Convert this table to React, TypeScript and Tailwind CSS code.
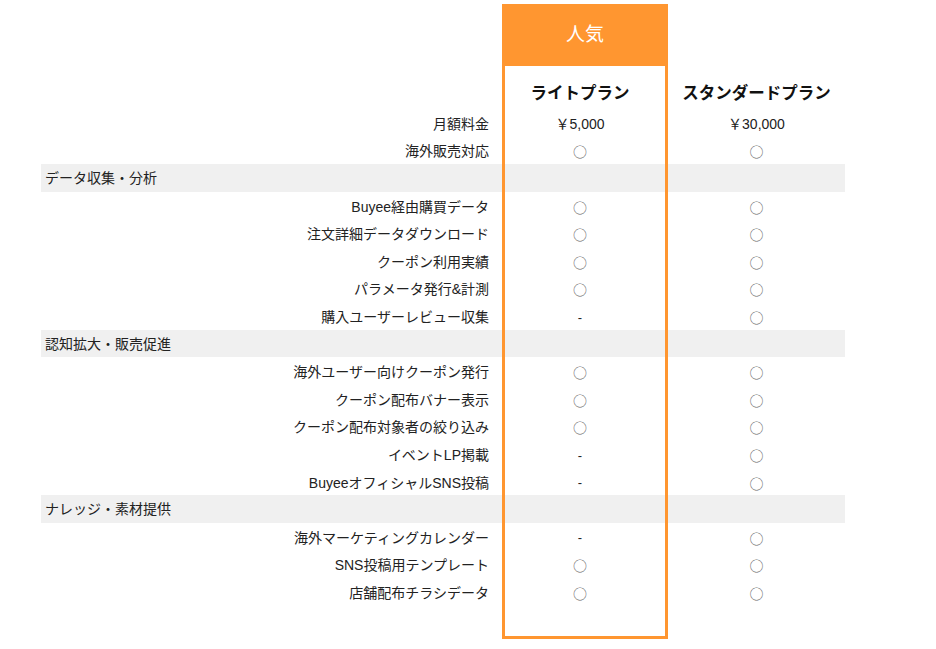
type Row =
  | { kind: "item"; label: string; light: string; standard: string }
  | { kind: "category"; label: string };

const rows: Row[] = [
  { kind: "item", label: "月額料金", light: "￥5,000", standard: "￥30,000" },
  { kind: "item", label: "海外販売対応", light: "o", standard: "o" },
  { kind: "category", label: "データ収集・分析" },
  { kind: "item", label: "Buyee経由購買データ", light: "o", standard: "o" },
  { kind: "item", label: "注文詳細データダウンロード", light: "o", standard: "o" },
  { kind: "item", label: "クーポン利用実績", light: "o", standard: "o" },
  { kind: "item", label: "パラメータ発行&計測", light: "o", standard: "o" },
  { kind: "item", label: "購入ユーザーレビュー収集", light: "-", standard: "o" },
  { kind: "category", label: "認知拡大・販売促進" },
  { kind: "item", label: "海外ユーザー向けクーポン発行", light: "o", standard: "o" },
  { kind: "item", label: "クーポン配布バナー表示", light: "o", standard: "o" },
  { kind: "item", label: "クーポン配布対象者の絞り込み", light: "o", standard: "o" },
  { kind: "item", label: "イベントLP掲載", light: "-", standard: "o" },
  { kind: "item", label: "BuyeeオフィシャルSNS投稿", light: "-", standard: "o" },
  { kind: "category", label: "ナレッジ・素材提供" },
  { kind: "item", label: "海外マーケティングカレンダー", light: "-", standard: "o" },
  { kind: "item", label: "SNS投稿用テンプレート", light: "o", standard: "o" },
  { kind: "item", label: "店舗配布チラシデータ", light: "o", standard: "o" },
];

function Cell({ value }: { value: string }) {
  if (value === "o")
    return (
      <span
        className="text-[14px] leading-none text-[#666] pt-[2px]"
        style={{ fontFamily: '"Noto Sans CJK JP", sans-serif' }}
      >
        ○
      </span>
    );
  if (value === "-") return <span className="text-[13px] pt-[3px]">-</span>;
  return <span className="text-[14px] pt-[3px]">{value}</span>;
}

const grid = "grid grid-cols-[461px_166px_177px]";
const lightCol = "border-x-[3px] border-[#ff9630]";

export default function App() {
  return (
    <div
      className="w-[936px] h-[649px] bg-white text-[#222] pt-[4px] pl-[41px]"
      style={{ fontFamily: '"Liberation Sans", "Noto Sans CJK JP", sans-serif' }}
    >
      <div className="w-[804px]">
        <div className={grid}>
          <div />
          <div className="h-[62px] bg-[#ff9630] flex items-center justify-center text-white text-[19px]">
            人気
          </div>
          <div />
        </div>

        <div className={`${grid} h-[43px]`}>
          <div />
          <div className={`${lightCol} flex items-end justify-center pb-[3px] pr-[10px] text-[16.5px] font-bold text-[#111]`}>
            ライトプラン
          </div>
          <div className="flex items-end justify-center pb-[3px] text-[16.5px] font-bold text-[#111]">
            スタンダードプラン
          </div>
        </div>

        {rows.map((r, i) =>
          r.kind === "category" ? (
            <div key={i} className={`${grid} h-[27.6px] bg-[#f0f0f0] text-[14px]`}>
              <div className="flex items-center pl-[4px] pt-[1px]">{r.label}</div>
              <div className={lightCol} />
              <div />
            </div>
          ) : (
            <div key={i} className={`${grid} h-[27.6px]`}>
              <div className="flex items-center justify-end pr-[13px] pt-[3px] text-[14px]">{r.label}</div>
              <div className={`${lightCol} flex items-center justify-center pr-[10px]`}>
                <Cell value={r.light} />
              </div>
              <div className="flex items-center justify-center">
                <Cell value={r.standard} />
              </div>
            </div>
          )
        )}

        <div className={grid}>
          <div />
          <div className={`${lightCol} border-b-[3px] h-[33px]`} />
          <div />
        </div>
      </div>
    </div>
  );
}
